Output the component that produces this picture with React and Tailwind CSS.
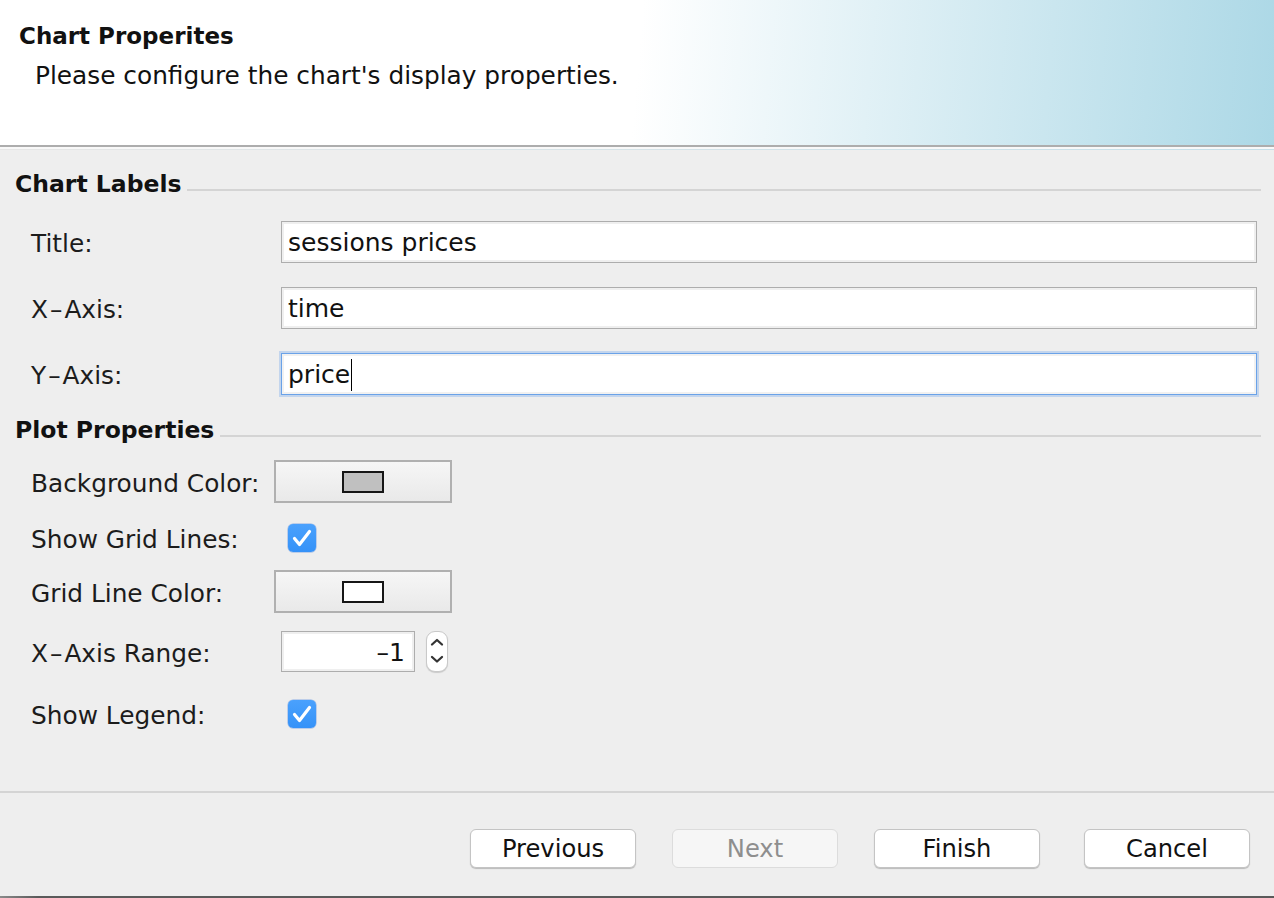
import React from 'react';

const FONT = "font-['DejaVu_Sans',sans-serif]";
const LABEL = 'text-[24.8px] leading-[30px] text-[#1c1c1c] whitespace-nowrap';

function Dash() {
  return <span className="mx-[2px]">–</span>;
}

function SectionHeading({ title, lineClass }) {
  return (
    <div className="flex items-start pl-[15px] pr-[13px]">
      <span className="text-[23.5px] leading-[30px] font-bold text-[#111] whitespace-nowrap">{title}</span>
      <div className={`flex-1 h-[2px] bg-[#d4d4d4] ml-[6px] ${lineClass}`} />
    </div>
  );
}

function TextField({ value, focused }) {
  return (
    <div
      className={
        focused
          ? 'flex-1 h-[42px] flex items-center pl-[6px] pt-[2px] bg-white border border-[#6aa2e8] shadow-[0_0_0_2px_rgba(130,175,235,0.4),inset_0_0_0_2px_#f1f1f1]'
          : 'flex-1 h-[42px] flex items-center pl-[6px] pt-[2px] bg-white border border-[#adadad] shadow-[inset_0_0_0_2px_#efefef]'
      }
    >
      <span className="text-[25px] leading-[30px] text-[#111] whitespace-nowrap">{value}</span>
      {focused && <span className="w-[1px] h-[32px] bg-black ml-[1px]" />}
    </div>
  );
}

function LabelRow({ label, children }) {
  return (
    <div className="flex items-center pl-[31px] pr-[17px]">
      <div className={`w-[250px] pt-[4px] ${LABEL}`}>{label}</div>
      {children}
    </div>
  );
}

function ColorButton({ swatch }) {
  return (
    <div className="w-[178px] h-[43px] flex items-center justify-center border-2 border-[#b0b0b0] bg-[linear-gradient(#f6f6f6,#e9e9e9)]">
      <div
        className={
          swatch === 'gray'
            ? 'w-[42px] h-[22px] border-2 border-[#161616] bg-[#c0c0c0]'
            : 'w-[42px] h-[22px] border-2 border-[#161616] bg-white'
        }
      />
    </div>
  );
}

function Checkbox() {
  return (
    <div className="ml-[14px] w-[28px] h-[28px] rounded-[5px] bg-[linear-gradient(#4aa1fd,#3592f8)] flex items-center justify-center shadow-[0_0_0_0.5px_rgba(40,110,220,0.5)]">
      <svg width="28" height="28" viewBox="0 0 28 28">
        <path d="M6.5 14.5 L11.5 20.5 L21.5 7.5" fill="none" stroke="white" strokeWidth="3.2" strokeLinecap="round" strokeLinejoin="round" />
      </svg>
    </div>
  );
}

function Spinner() {
  return (
    <div className="ml-[11px] w-[22px] h-[41px] rounded-[9px] bg-white border border-[#c9c9c9] shadow-[0_1px_1px_rgba(0,0,0,0.15)] flex items-center justify-center">
      <svg width="20" height="39" viewBox="0 0 20 39">
        <path d="M5 12.5 L10 8 L15 12.5" fill="none" stroke="#333" strokeWidth="2.3" strokeLinecap="round" strokeLinejoin="round" />
        <path d="M5 25 L10 29.5 L15 25" fill="none" stroke="#333" strokeWidth="2.3" strokeLinecap="round" strokeLinejoin="round" />
      </svg>
    </div>
  );
}

function PlotRow({ label, rowClass, children }) {
  return (
    <div className={`flex items-center pl-[31px] ${rowClass}`}>
      <div className={`w-[243px] pt-[4px] ${LABEL}`}>{label}</div>
      {children}
    </div>
  );
}

function WizardButton({ label, disabled, className }) {
  return (
    <button
      className={
        disabled
          ? `w-[166px] h-[39px] rounded-[6px] bg-[#f6f6f6] border border-[#dcdcdc] text-[24.2px] leading-[30px] text-[#8e8e8e] ${className}`
          : `w-[166px] h-[39px] rounded-[6px] bg-white border border-[#c4c4c4] shadow-[0_1px_1px_rgba(0,0,0,0.22)] text-[24.2px] leading-[30px] text-[#111] ${className}`
      }
    >
      {label}
    </button>
  );
}

export default function App() {
  return (
    <div className={`w-[1274px] h-[898px] flex flex-col bg-[#eeeeee] overflow-hidden ${FONT}`}>
      {/* Header banner */}
      <div className="h-[145px] pl-[19px] pt-[22px] bg-[linear-gradient(95deg,#ffffff_50%,#acd8e6_100%)]">
        <div className="text-[23px] leading-[28px] font-bold text-[#111]">Chart Properites</div>
        <div className="mt-[11px] ml-[16px] text-[24.8px] leading-[30px] text-[#111]">
          Please configure the chart's display properties.
        </div>
      </div>
      <div className="h-[2px] bg-[#adadad]" />
      <div className="h-[2px] bg-[#f8f8f8]" />
      <div className="h-[1px] bg-[linear-gradient(90deg,#e6e6e6,#c4dfe9)]" />

      {/* Body */}
      <div className="flex-1 flex flex-col pt-[19px]">
        <SectionHeading title="Chart Labels" lineClass="mt-[20px]" />
        <div className="mt-[22px] flex flex-col gap-[24px]">
          <LabelRow label="Title:">
            <TextField value="sessions prices" />
          </LabelRow>
          <LabelRow label={<>X<Dash />Axis:</>}>
            <TextField value="time" />
          </LabelRow>
          <LabelRow label={<>Y<Dash />Axis:</>}>
            <TextField value="price" focused />
          </LabelRow>
        </div>

        <div className="mt-[20px]">
          <SectionHeading title="Plot Properties" lineClass="mt-[20px]" />
        </div>

        <div className="flex flex-col">
          <PlotRow label="Background Color:" rowClass="mt-[15px] h-[43px]">
            <ColorButton swatch="gray" />
          </PlotRow>
          <PlotRow label="Show Grid Lines:" rowClass="mt-[21px] h-[28px]">
            <Checkbox />
          </PlotRow>
          <PlotRow label="Grid Line Color:" rowClass="mt-[18px] h-[43px]">
            <ColorButton swatch="white" />
          </PlotRow>
          <PlotRow label={<>X<Dash />Axis Range:</>} rowClass="mt-[18px] h-[41px]">
            <div className="ml-[7px] w-[134px] h-[41px] flex items-center justify-end pr-[9px] pt-[2px] bg-white border border-[#adadad] shadow-[inset_0_0_0_2px_#efefef]">
              <span className="text-[25px] leading-[30px] text-[#111]">–1</span>
            </div>
            <Spinner />
          </PlotRow>
          <PlotRow label="Show Legend:" rowClass="mt-[28px] h-[28px]">
            <Checkbox />
          </PlotRow>
        </div>
      </div>

      {/* Footer */}
      <div className="h-[2px] bg-[#d4d4d4]" />
      <div className="h-[103px] flex justify-end items-start pt-[36px] pr-[24px]">
        <WizardButton label="Previous" />
        <WizardButton label="Next" disabled className="ml-[36px]" />
        <WizardButton label="Finish" className="ml-[36px]" />
        <WizardButton label="Cancel" className="ml-[44px]" />
      </div>
      <div className="h-[2px] bg-[linear-gradient(90deg,#8a8a8a,#5a5a5a_3%,#5a5a5a)]" />
    </div>
  );
}
